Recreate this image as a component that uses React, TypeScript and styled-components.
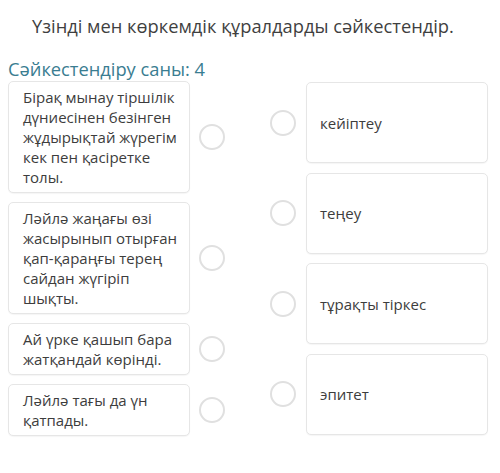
import React from "react";
import styled, { createGlobalStyle } from "styled-components";

const Global = createGlobalStyle`
  html, body { margin: 0; padding: 0; background: #ffffff; }
  body { font-family: "Open Sans", "Noto Sans", sans-serif; color: #3d3d3d; }
`;

const Page = styled.div`
  width: 500px;
  height: 473px;
  box-sizing: border-box;
  padding: 13px 12px 0 8px;
`;

const Title = styled.h1`
  margin: 0 0 0 24px;
  font-size: 18.3px;
  font-weight: 400;
  line-height: 26px;
  color: #3f3f3f;
`;

const Counter = styled.h2`
  margin: 18px 0 0 0;
  font-size: 18.3px;
  font-weight: 400;
  line-height: 24px;
  color: #3a7d91;
`;

const Board = styled.div`
  display: flex;
  justify-content: space-between;
`;

const Column = styled.div<{ $right?: boolean }>`
  display: flex;
  flex-direction: column;
  gap: ${(p) => (p.$right ? "9.5px" : "9px")};
  padding-top: ${(p) => (p.$right ? "1px" : "0")};
`;

const Row = styled.div<{ $right?: boolean }>`
  display: flex;
  align-items: center;
  gap: ${(p) => (p.$right ? "10px" : "9px")};
`;

const Card = styled.div<{ $fixed?: boolean }>`
  box-sizing: border-box;
  width: 182px;
  border: 1px solid #e6e6e6;
  border-radius: 5px;
  background: #fff;
  box-shadow: 0 1px 1px rgba(0, 0, 0, 0.04);
  font-size: 15px;
  line-height: 20px;
  color: #3d3d3d;
  padding: ${(p) => (p.$fixed ? "0 10px 0 13px" : "5px 8px 5px 14px")};
  ${(p) =>
    p.$fixed
      ? `height: 81px; display: flex; align-items: center;`
      : ""}
`;

const Dot = styled.div`
  box-sizing: border-box;
  width: 26px;
  height: 26px;
  border-radius: 50%;
  border: 2px solid #e0e0e0;
  background: #fff;
  flex: none;
`;

const left = [
  "Бірақ мынау тіршілік дүниесінен безінген жұдырықтай жүрегім кек пен қасіретке толы.",
  "Ләйлә жаңағы өзі жасырынып отырған қап-қараңғы терең сайдан жүгіріп шықты.",
  "Ай үрке қашып бара жатқандай көрінді.",
  "Ләйлә тағы да үн қатпады.",
];

const right = ["кейіптеу", "теңеу", "тұрақты тіркес", "эпитет"];

export default function App() {
  return (
    <>
      <Global />
      <Page>
        <Title>Үзінді мен көркемдік құралдарды сәйкестендір.</Title>
        <Counter>Сәйкестендіру саны: 4</Counter>
        <Board>
          <Column>
            {left.map((t) => (
              <Row key={t}>
                <Card>{t}</Card>
                <Dot />
              </Row>
            ))}
          </Column>
          <Column $right>
            {right.map((t) => (
              <Row key={t} $right>
                <Dot />
                <Card $fixed>{t}</Card>
              </Row>
            ))}
          </Column>
        </Board>
      </Page>
    </>
  );
}
